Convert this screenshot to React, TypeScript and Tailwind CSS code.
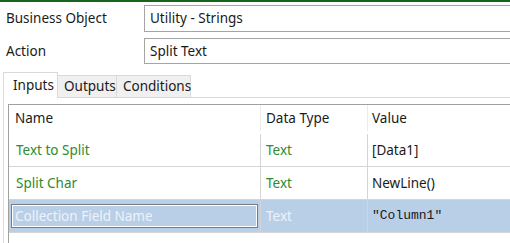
const font = "font-['Noto_Sans','Open_Sans',sans-serif]"

function Field({ label, value, h }: { label: string; value: string; h: string }) {
  return (
    <div className={`flex items-center ${h}`}>
      <div className="w-[144px] pl-[6px] text-[#1a1a1a]">{label}</div>
      <div className="flex-1 h-full flex items-center pl-[5px] border-y border-l border-[#a5a5a5] bg-white text-[#1a1a1a]">
        {value}
      </div>
    </div>
  )
}

function Tab({ label, w, active }: { label: string; w: string; active?: boolean }) {
  return active ? (
    <div className={`h-[26px] ${w} flex items-center pl-[9px] bg-white border-t border-x border-[#d9d9d9] relative top-px`}>
      {label}
    </div>
  ) : (
    <div className={`h-[22px] ${w} flex items-center pl-[6px] bg-[#f0f0f0] border-t border-r border-[#d9d9d9] self-end`}>
      {label}
    </div>
  )
}

const rows = [
  { name: 'Text to Split', type: 'Text', value: '[Data1]' },
  { name: 'Split Char', type: 'Text', value: 'NewLine()' },
]

export default function App() {
  return (
    <div className={`w-[510px] h-[243px] bg-white overflow-hidden flex flex-col text-[13.5px] ${font}`}>
      <div className="h-[2px] bg-[#17651a]" />
      <div className="flex flex-col gap-[6px] pt-[3px]">
        <Field label="Business Object" value="Utility - Strings" h="h-[27px]" />
        <Field label="Action" value="Split Text" h="h-[26px]" />
      </div>

      {/* tab strip */}
      <div className="flex items-end h-[26px] mt-[7px] pl-[3px] text-[#1a1a1a]">
        <Tab label="Inputs" w="w-[55px]" active />
        <Tab label="Outputs" w="w-[59px]" />
        <Tab label="Conditions" w="w-[74px]" />
      </div>

      {/* tab panel */}
      <div className="flex-1 ml-[3px] border-l border-t border-[#d9d9d9] pl-[4px] pt-[6px]">
        <div className="h-full border-l border-t border-[#a0a0a0]">
          <div className="flex h-[29px] items-center pb-[3px] text-[#1a1a1a]">
            <div className="w-[251px] pl-[6px]">Name</div>
            <div className="w-[107px] h-full flex items-center pl-[5px] border-l border-[#ececec]">Data Type</div>
            <div className="flex-1 h-full flex items-center pl-[4px] border-l border-[#ececec]">Value</div>
          </div>
          {rows.map((r) => (
            <div key={r.name} className="flex h-[33px] items-center border-b border-[#d4d4d4]">
              <div className="w-[251px] pl-[7px] text-[#2e8b2e]">{r.name}</div>
              <div className="w-[107px] h-full flex items-center pl-[5px] border-l border-[#d4d4d4] text-[#2e8b2e]">{r.type}</div>
              <div className="flex-1 h-full flex items-center pl-[4px] border-l border-[#d4d4d4] text-[#1a1a1a]">{r.value}</div>
            </div>
          ))}
          <div className="flex h-[33px] items-center bg-[#b9cfe8] border-b border-[#d4d4d4]">
            <div className="w-[251px] h-full flex items-center pl-[2px] pr-[2px]">
              <div className="w-full h-[24px] flex items-center pl-[3px] border border-[#7b7b7b] shadow-[inset_0_0_0_1px_#ffffff] text-[#eef2f8]">
                Collection Field Name
              </div>
            </div>
            <div className="w-[107px] h-full flex items-center pl-[5px] border-l border-[#d4d4d4] text-[#eef2f8]">Text</div>
            <div className="flex-1 h-full flex items-center pl-[4px] border-l border-[#d4d4d4] text-[#1a1a1a] text-[13px] font-['Liberation_Mono',monospace]">
              "Column1"
            </div>
          </div>
        </div>
      </div>
    </div>
  )
}
